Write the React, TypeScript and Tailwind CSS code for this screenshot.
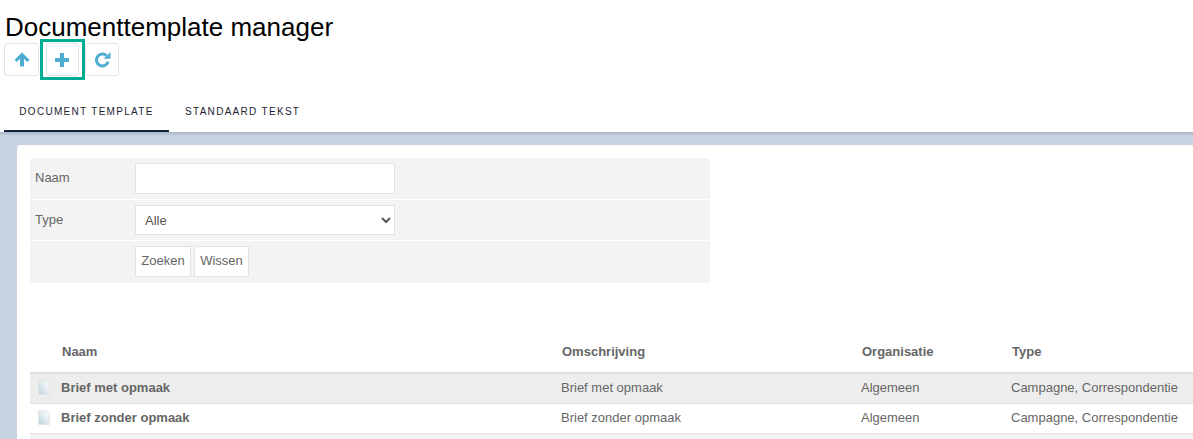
const rows = [
  { name: "Brief met opmaak", bg: "bg-[#ededed]" },
  { name: "Brief zonder opmaak", bg: "bg-white" },
];

const FileIcon = () => (
  <svg width="12" height="15" viewBox="0 0 12 15" className="shrink-0">
    <defs>
      <linearGradient id="paper" x1="0" y1="1" x2="1" y2="0">
        <stop offset="0" stopColor="#b9d0dc" />
        <stop offset="0.55" stopColor="#e6edf1" />
        <stop offset="1" stopColor="#fafafa" />
      </linearGradient>
    </defs>
    <path d="M0.5 0.5H8L11.5 4V14.5H0.5Z" fill="url(#paper)" stroke="#e2e6e8" />
  </svg>
);

const ToolButton = ({ children, className }: { children: React.ReactNode; className: string }) => (
  <button
    className={`flex h-[33px] items-center justify-center rounded-[3px] border border-[#e3e3e3] bg-white text-[#4fadd2] ${className}`}
  >
    {children}
  </button>
);

const App: React.FC = () => {
  return (
    <div className="h-[439px] w-[1193px] overflow-hidden bg-white font-['Liberation_Sans',Arial,sans-serif] text-[13px] text-[#666]">
      <h1 className="pl-[5px] pt-[11px] text-[26px] leading-[32px] text-black">Documenttemplate manager</h1>
      <div className="flex items-center pl-1">
        <ToolButton className="w-[35px]">
          <svg width="16" height="15" viewBox="0 0 16 15" fill="currentColor">
            <path d="M8 0.5L15.5 7.8L13.3 10L10 6.8V14.5H6V6.8L2.7 10L0.5 7.8Z" />
          </svg>
        </ToolButton>
        <div className="-my-[4px] ml-[1px] flex h-[41px] w-[45px] items-center justify-center border-3 border-[#00ad92]">
          <ToolButton className="w-[33px] pr-[1px]">
            <svg width="14" height="14" viewBox="0 0 14 14" fill="currentColor">
              <path d="M5 0H9V5H14V9H9V14H5V9H0V5H5Z" />
            </svg>
          </ToolButton>
        </div>
        <ToolButton className="w-[34px]">
          <svg width="17" height="17" viewBox="0 0 16 16" fill="none">
            <path d="M11.8 4.4A5.6 5.6 0 1 0 13.3 10" stroke="currentColor" strokeWidth="2.8" />
            <path d="M15.5 1V7.4H9.1Z" fill="currentColor" />
          </svg>
        </ToolButton>
      </div>

      <div className="mt-[16px] flex h-[40px] pl-1 text-[10px] uppercase tracking-[1.3px] text-[#1b2433]">
        <div className="flex w-[165px] items-center justify-center border-b-2 border-[#14233f]">Document template</div>
        <div className="flex items-center pb-[2px] pl-[16px]">Standaard tekst</div>
      </div>

      <div className="h-[307px] bg-[#c8d3e1] bg-linear-to-b from-[#aab5c3] to-[#c8d3e1] to-[4px] pl-[17px] pt-[13px]">
        <div className="h-full rounded-tl-[3px] bg-white pl-[13px] pt-[13px]">
          <div className="w-[680px] rounded-[3px] bg-[#f3f3f3]">
            <div className="flex h-[42px] items-start border-b border-white">
              <span className="w-[105px] pl-[5px] pt-[10px]">Naam</span>
              <input className="mt-[5px] h-[31px] w-[260px] border border-[#e3e3e3] bg-white" />
            </div>
            <div className="flex h-[41px] items-start border-b border-white">
              <span className="w-[105px] pl-[5px] pt-[10px]">Type</span>
              <select className="mt-[5px] h-[30px] w-[260px] border border-[#e3e3e3] bg-white pl-[5px] text-[13px] text-[#555]">
                <option>Alle</option>
              </select>
            </div>
            <div className="flex h-[42px] items-start pl-[105px] pt-[5px]">
              <button className="h-[31px] w-[56px] border border-[#e3e3e3] bg-white pb-[2px]">Zoeken</button>
              <button className="ml-[3px] h-[31px] w-[55px] border border-[#e3e3e3] bg-white pb-[2px]">Wissen</button>
            </div>
          </div>

          <div className="mb-[2px] mt-[51px] flex h-[36px] items-center font-bold">
            <span className="w-[532px] pl-[32px]">Naam</span>
            <span className="w-[300px]">Omschrijving</span>
            <span className="w-[150px]">Organisatie</span>
            <span>Type</span>
          </div>
          {rows.map((row, i) => (
            <div
              key={row.name}
              className={`flex items-center border-b border-[#dedede] pb-[2px] ${row.bg} ${i === 0 ? "h-[32px] border-t-2 border-t-[#dedede]" : "h-[30px]"}`}
            >
              <div className="flex w-[531px] items-center gap-[11px] pl-[8px] font-bold">
                <FileIcon />
                <span>{row.name}</span>
              </div>
              <span className="w-[300px]">{row.name}</span>
              <span className="w-[150px]">Algemeen</span>
              <span>Campagne, Correspondentie</span>
            </div>
          ))}
          <div className="h-[6px] bg-[#f2f2f2]" />
        </div>
      </div>
    </div>
  );
};

export default App;
